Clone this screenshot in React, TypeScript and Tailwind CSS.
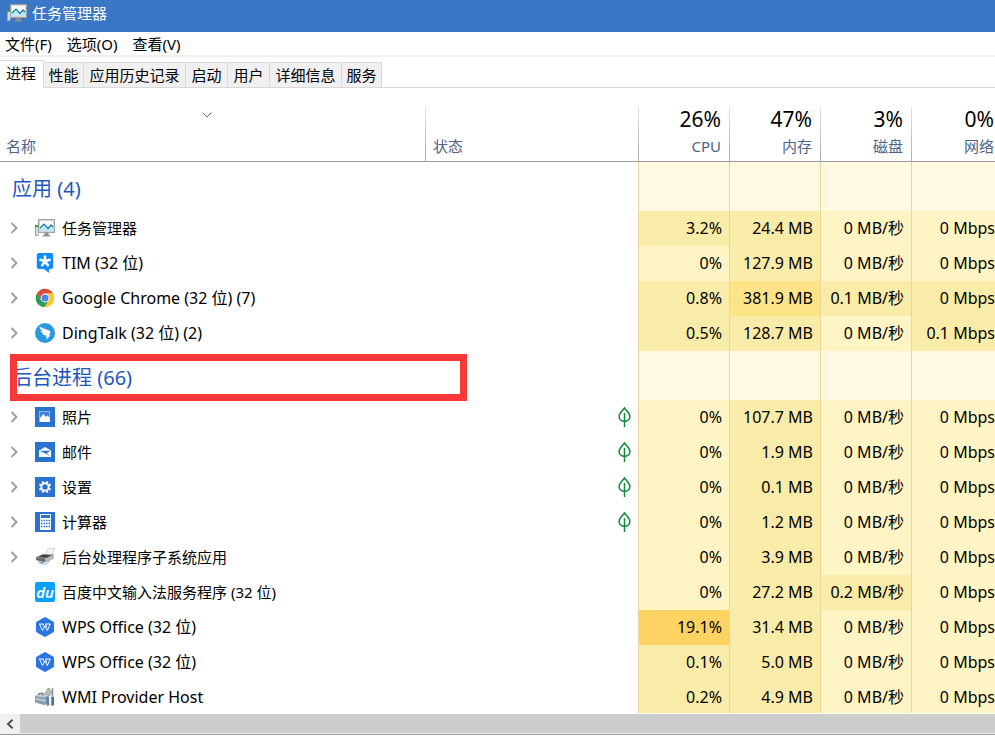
import React from 'react';
import clsx from 'clsx';

type Heat = 'low' | 'mid' | 'high' | 'max';

interface Process {
  id: string;
  name: string;
  icon: React.FC;
  expandable?: boolean;
  suspended?: boolean;
  values: [string, string, string, string];
  heat: [Heat, Heat, Heat, Heat];
}

const heatColors: Record<Heat, string> = {
  low: 'bg-[#fff4c4]',
  mid: 'bg-[#f9eca8]',
  high: 'bg-[#ffe387]',
  max: 'bg-[#ffd264]',
};

/* Process icons */

const TaskManagerIcon: React.FC = () => (
  <svg viewBox="0 0 20 20" className="h-5 w-5">
    <path d="M0 7h3.500v11H0z" fill="#a4a4a4" />
    <path d="M1 9h2v8H1z" fill="#dadada" />
    <path d="M0 7h3v2H0z" fill="#17b81a" />
    <rect x="3" y="1" width="17" height="14" fill="#9fa3a3" />
    <rect x="4" y="2" width="15" height="12" fill="#d3d5d5" />
    <rect x="5" y="3" width="13" height="10" fill="#f6fcfe" />
    <path d="M5 10l4-4 4 4.500 3-3.500 2 2v4H5z" fill="#bde9f8" />
    <path d="M5 10l4-4 4 4.500 3-3.500 2 2" fill="none" stroke="#17789f" strokeWidth="1.200" />
    <path d="M9.500 15h4v1.500l2.500 2H7l2.500-2z" fill="#8e8e8e" />
  </svg>
);

const TimIcon: React.FC = () => (
  <svg viewBox="0 0 20 20" className="h-5 w-5">
    <path
      d="M4 0h12a2.200 2.200 0 0 1 2.200 2.200v11.600A2.200 2.200 0 0 1 16 16h-2v4l-5-4H4a2.200 2.200 0 0 1-2.200-2.200V2.200A2.200 2.200 0 0 1 4 0z"
      fill="#0f8cfb"
    />
    <path
      d="M10 8.300V3.500M10 8.300l4.600-1.500M10 8.300l2.800 3.900M10 8.300l-2.800 3.900M10 8.300L5.400 6.800"
      stroke="#fff"
      strokeWidth="2.600"
      strokeLinecap="round"
    />
  </svg>
);

const ChromeIcon: React.FC = () => (
  <svg viewBox="0 0 20 20" className="h-5 w-5">
    <circle cx="10" cy="10" r="9.300" fill="#fcc934" />
    <path d="M1.950 5.350A9.300 9.300 0 0 1 18.050 5.350H10L6 12.300z" fill="#dd4b3e" />
    <path d="M1.950 5.350L6 12.300l4 2.200 3-1-4 5.700A9.300 9.300 0 0 1 1.950 5.350z" fill="#1c9f5a" />
    <circle cx="10" cy="10" r="4.400" fill="#fff" />
    <circle cx="10" cy="10" r="3.500" fill="#4a86ee" />
  </svg>
);

const DingTalkIcon: React.FC = () => (
  <svg viewBox="0 0 20 20" className="h-5 w-5">
    <circle cx="10" cy="10" r="10" fill="#2b98e3" />
    <path
      d="M4.500 3.500c2 1.600 6 2.500 10 4.300 1 .5 1 1.200.6 2.100l-1.200 2.300h1.600L11 17l.9-3.500h-1.500l.5-1.400c-2.200.3-3.300-.6-3.800-1.600l2.200-.1C7 9.900 5.800 9 5.500 7.800l2.600.4C5.800 7 4.500 5.600 4.500 3.500z"
      fill="#fff"
    />
  </svg>
);

const PhotosIcon: React.FC = () => (
  <svg viewBox="0 0 20 20" className="h-5 w-5">
    <path d="M0 0h20v20H0z" fill="#2972ce" />
    <rect x="4.500" y="4.500" width="10" height="10" fill="#3f83d8" stroke="#8cb7ec" />
    <path d="M5 15v-4L8.500 7l2.500 3 1.500-1.500L15 11v4z" fill="#fff" />
  </svg>
);

const MailIcon: React.FC = () => (
  <svg viewBox="0 0 20 20" className="h-5 w-5">
    <path d="M0 0h20v20H0z" fill="#2972ce" />
    <path d="M4 8.500L10 5l6 3.500V15H4z" fill="#fff" />
    <path d="M4.500 8.700h11.200L11 11.700z" fill="#2972ce" />
    <path d="M11 11.400l3 2" stroke="#2972ce" strokeWidth="0.800" />
  </svg>
);

const SettingsIcon: React.FC = () => (
  <svg viewBox="0 0 20 20" className="h-5 w-5">
    <path d="M0 0h20v20H0z" fill="#2972ce" />
    <circle cx="10" cy="10" r="3.700" fill="none" stroke="#fff" strokeWidth="2" />
    <path
      d="M8 6L7.400 4.300M12 6l.6-1.700M14 8l1.700-.6M14 12l1.700.6M12 14l.6 1.700M8 14l-.6 1.700M6 12l-1.700.6M6 8l-1.700-.6"
      stroke="#fff"
      strokeWidth="2"
    />
  </svg>
);

const CalculatorIcon: React.FC = () => (
  <svg viewBox="0 0 20 20" className="h-5 w-5">
    <path d="M0 0h20v20H0z" fill="#2972ce" />
    <path d="M5 2h11v16H5z" fill="#fff" />
    <path d="M6 3h9v3H6z" fill="#2972ce" />
    <path
      d="M6 8.500h9M6 11.500h9M6 14.500h9"
      stroke="#2972ce"
      strokeWidth="1.500"
      strokeDasharray="1.500 1"
    />
  </svg>
);

const PrinterIcon: React.FC = () => (
  <svg viewBox="0 0 20 20" className="h-5 w-5">
    <path d="M10 8l3-6 6.500-.500L17 9z" fill="#f3f3f3" stroke="#bbb" strokeWidth="0.600" />
    <path d="M1 10l7-3 11 .5-2 5-7 2.500-9-2z" fill="#8f9396" />
    <path d="M3 9.800l5-2 8 .5-4.500 2.500z" fill="#3d4144" />
    <path d="M1 10.500l9 1.500v3.500L1.500 13z" fill="#62686b" />
    <path d="M10 12l9-4v3.500l-8 4.500z" fill="#b9bcbe" />
    <path d="M3 14l7 1 4-1.500v1.500l-4 2.500-6-1.500z" fill="#dfe5e9" stroke="#8d979d" strokeWidth="0.500" />
    <path d="M6 15l3 .6-1.500 1L5 16z" fill="#4192c4" />
  </svg>
);

const BaiduIcon: React.FC = () => (
  <span className="flex h-5 w-5 items-center justify-center rounded-xs bg-[#0a9ffb] text-[15px] leading-5 font-semibold text-white italic">
    du
  </span>
);

const WpsIcon: React.FC = () => (
  <svg viewBox="0 0 20 20" className="h-5 w-5">
    <path
      d="M9 .4a2 2 0 0 1 2 0l7 4a2 2 0 0 1 1 1.700v7.800a2 2 0 0 1-1 1.700l-7 4a2 2 0 0 1-2 0l-7-4a2 2 0 0 1-1-1.700V6.100a2 2 0 0 1 1-1.700z"
      fill="#2a74e6"
    />
    <path
      d="M4 7h4.500M4.500 7l3 6.500L10 9l2.300 4.500 3-6.500h-5l1.600 3.200M8 7l1.300 2.800"
      fill="none"
      stroke="#fff"
      strokeWidth="1"
    />
  </svg>
);

const WmiIcon: React.FC = () => (
  <svg viewBox="0 0 20 20" className="h-5 w-5">
    <path d="M9 8l4-7 2 .5v3l2-1 .5 2-3 3.500z" fill="#b7bbbd" stroke="#858b8e" strokeWidth="0.500" />
    <path d="M0 9l5-2.500 9 1.500v9L9 18l-9-2.500z" fill="#8b9fac" />
    <path d="M0 9l5-2.500 9 1.500-5 2.500z" fill="#c4d0d7" />
    <path d="M1 12l8 1.500 3-1" fill="none" stroke="#dfe8ec" />
    <path d="M4 8V6.500L8 6v2.500" fill="none" stroke="#555e64" />
    <path d="M11 11l2.500-1 1 8-2.500 1z" fill="#5583ad" />
    <path d="M17.500 1v9" stroke="#8d9396" strokeWidth="1.500" />
    <path d="M16 10h3v8.500h-3z" fill="#48719b" />
    <path d="M16.500 11v7" stroke="#8db3d3" strokeWidth="0.700" />
  </svg>
);

const LeafIcon: React.FC = () => (
  <svg viewBox="0 0 14 20" className="h-5 w-3.5">
    <path
      d="M7.500 1C9 3.500 12.900 5.500 12.900 9.500c0 2.700-2.300 4.700-5.400 4.700S2.100 12.200 2.100 9.500C2.100 5.500 6 3.500 7.500 1zM7.500 6v14"
      fill="none"
      stroke="#0f8c36"
      strokeWidth="1.500"
    />
  </svg>
);

const apps: Process[] = [
  {
    id: 'taskmgr',
    name: '任务管理器',
    icon: TaskManagerIcon,
    expandable: true,
    values: ['3.2%', '24.4 MB', '0 MB/秒', '0 Mbps'],
    heat: ['mid', 'mid', 'low', 'low'],
  },
  {
    id: 'tim',
    name: 'TIM (32 位)',
    icon: TimIcon,
    expandable: true,
    values: ['0%', '127.9 MB', '0 MB/秒', '0 Mbps'],
    heat: ['low', 'mid', 'low', 'low'],
  },
  {
    id: 'chrome',
    name: 'Google Chrome (32 位) (7)',
    icon: ChromeIcon,
    expandable: true,
    values: ['0.8%', '381.9 MB', '0.1 MB/秒', '0 Mbps'],
    heat: ['mid', 'high', 'mid', 'mid'],
  },
  {
    id: 'dingtalk',
    name: 'DingTalk (32 位) (2)',
    icon: DingTalkIcon,
    expandable: true,
    values: ['0.5%', '128.7 MB', '0 MB/秒', '0.1 Mbps'],
    heat: ['mid', 'mid', 'low', 'mid'],
  },
];

const background: Process[] = [
  {
    id: 'photos',
    name: '照片',
    icon: PhotosIcon,
    expandable: true,
    suspended: true,
    values: ['0%', '107.7 MB', '0 MB/秒', '0 Mbps'],
    heat: ['low', 'mid', 'low', 'low'],
  },
  {
    id: 'mail',
    name: '邮件',
    icon: MailIcon,
    expandable: true,
    suspended: true,
    values: ['0%', '1.9 MB', '0 MB/秒', '0 Mbps'],
    heat: ['low', 'mid', 'low', 'low'],
  },
  {
    id: 'settings',
    name: '设置',
    icon: SettingsIcon,
    expandable: true,
    suspended: true,
    values: ['0%', '0.1 MB', '0 MB/秒', '0 Mbps'],
    heat: ['low', 'mid', 'low', 'low'],
  },
  {
    id: 'calculator',
    name: '计算器',
    icon: CalculatorIcon,
    expandable: true,
    suspended: true,
    values: ['0%', '1.2 MB', '0 MB/秒', '0 Mbps'],
    heat: ['low', 'mid', 'low', 'low'],
  },
  {
    id: 'spooler',
    name: '后台处理程序子系统应用',
    icon: PrinterIcon,
    expandable: true,
    values: ['0%', '3.9 MB', '0 MB/秒', '0 Mbps'],
    heat: ['low', 'mid', 'low', 'low'],
  },
  {
    id: 'baidu',
    name: '百度中文输入法服务程序 (32 位)',
    icon: BaiduIcon,
    values: ['0%', '27.2 MB', '0.2 MB/秒', '0 Mbps'],
    heat: ['low', 'mid', 'mid', 'low'],
  },
  {
    id: 'wps-1',
    name: 'WPS Office (32 位)',
    icon: WpsIcon,
    values: ['19.1%', '31.4 MB', '0 MB/秒', '0 Mbps'],
    heat: ['max', 'mid', 'low', 'low'],
  },
  {
    id: 'wps-2',
    name: 'WPS Office (32 位)',
    icon: WpsIcon,
    values: ['0.1%', '5.0 MB', '0 MB/秒', '0 Mbps'],
    heat: ['mid', 'mid', 'low', 'low'],
  },
  {
    id: 'wmi',
    name: 'WMI Provider Host',
    icon: WmiIcon,
    values: ['0.2%', '4.9 MB', '0 MB/秒', '0 Mbps'],
    heat: ['mid', 'mid', 'low', 'low'],
  },
];

const menus = ['文件(F)', '选项(O)', '查看(V)'];

const tabs = [
  { label: '性能', width: 'w-10' },
  { label: '应用历史记录', width: 'w-[102px]' },
  { label: '启动', width: 'w-[42px]' },
  { label: '用户', width: 'w-[42px]' },
  { label: '详细信息', width: 'w-[72px]' },
  { label: '服务', width: 'w-10' },
];

const resources = [
  { label: 'CPU', usage: '26%' },
  { label: '内存', usage: '47%' },
  { label: '磁盘', usage: '3%' },
  { label: '网络', usage: '0%' },
];

// Column separator that fades out towards the top of the header
const headerRule =
  'bg-[linear-gradient(to_bottom,#e4e4e4,#ababab)] bg-[length:1px_54px] bg-left-bottom bg-no-repeat';

// Names that start with Latin letters are set one size up, next to the denser Chinese ones
const nameSize = (name: string) => (/^[A-Z]/.test(name) ? 'text-base' : 'text-[15px]');

const GroupRow: React.FC<{ title: string; highlighted?: boolean }> = ({ title, highlighted }) => (
  <tr className="h-[49px]">
    <th
      scope="rowgroup"
      colSpan={2}
      className="relative pt-1 pl-3 text-left text-xl leading-7 font-normal text-[#1e57bd]"
    >
      {title}
      {highlighted && (
        <span className="absolute top-[3px] left-2.5 h-[47px] w-[457px] border-7 border-[#fb3838]" />
      )}
    </th>
    {resources.map((resource) => (
      <td key={resource.label} className="border-l border-[#e9d59f] bg-[#fff8e3]" />
    ))}
  </tr>
);

const ProcessRow: React.FC<{ process: Process }> = ({ process }) => {
  const Icon = process.icon;

  return (
    <tr className="h-[35px]">
      <td className="pb-0.5">
        <div className="flex items-center pl-2.5">
          <span className="w-[25px]">
            {process.expandable && (
              <button aria-label={`展开 ${process.name}`} className="block">
                <svg viewBox="0 0 8 12" className="h-3 w-2">
                  <path d="M1.500 1l5 5-5 5" fill="none" stroke="#9f9f9f" strokeWidth="2" />
                </svg>
              </button>
            )}
          </span>
          <Icon />
          <span className={clsx('pl-[7px] leading-5 whitespace-nowrap', nameSize(process.name))}>
            {process.name}
          </span>
        </div>
      </td>
      <td className="pb-0.5">
        {process.suspended && (
          <div className="flex justify-end pr-[7px]">
            <LeafIcon />
          </div>
        )}
      </td>
      {process.values.map((value, i) => (
        <td
          key={resources[i].label}
          className={clsx(
            'border-l border-[#e9d59f] pr-[7px] pb-0.5 text-right text-base leading-5 whitespace-nowrap',
            heatColors[process.heat[i]],
          )}
        >
          {value}
        </td>
      ))}
    </tr>
  );
};

export default function App() {
  return (
    <div className="min-h-screen overflow-hidden bg-white font-['Noto_Sans','Noto_Sans_CJK_SC',sans-serif] text-[15px] leading-5 text-black">
      {/* Title bar */}
      <header className="flex h-8 items-center gap-[5px] bg-[#3a78c7] pb-1.5 pl-[7px] text-white">
        <TaskManagerIcon />
        <h1>任务管理器</h1>
      </header>

      {/* Menu bar */}
      <nav className="flex h-[25px] items-center gap-[15px] border-b-2 border-[#f0f0f0] pl-[5px]">
        {menus.map((menu) => (
          <button key={menu}>{menu}</button>
        ))}
      </nav>

      {/* Tabs */}
      <div role="tablist" className="flex items-end pt-[3px]">
        <button
          role="tab"
          aria-selected="true"
          className="h-7 w-11 border-t border-r border-[#d9d9d9] pr-px pb-1"
        >
          进程
        </button>
        {tabs.map((tab) => (
          <button
            key={tab.label}
            role="tab"
            aria-selected="false"
            className={clsx(
              'h-[26px] border-t border-r border-b border-[#d9d9d9] bg-[#f0f0f0] whitespace-nowrap',
              tab.width,
            )}
          >
            {tab.label}
          </button>
        ))}
        <div className="flex-1 border-b border-[#d9d9d9]" />
      </div>

      {/* Process list */}
      <table className="w-[calc(100%+7px)] table-fixed border-separate border-spacing-0">
        <colgroup>
          <col />
          <col className="w-[213px]" />
          {resources.map((resource) => (
            <col key={resource.label} className="w-[91px]" />
          ))}
        </colgroup>
        <thead>
          <tr className="h-[74px] text-[#4d6488]">
            <th className="relative border-b border-[#9b9b9b] pb-[5px] pl-1.5 text-left align-bottom font-normal">
              <svg viewBox="0 0 10 6" className="absolute top-6 left-[202px] h-1.5 w-2.5">
                <path d="M.5.5L5 5 9.500.5" fill="none" stroke="#666" />
              </svg>
              名称
            </th>
            <th
              className={clsx(
                'border-b border-[#9b9b9b] pb-[5px] pl-2 text-left align-bottom font-normal',
                headerRule,
              )}
            >
              状态
            </th>
            {resources.map((resource) => (
              <th
                key={resource.label}
                className={clsx(
                  'border-b border-[#9b9b9b] pr-2 pb-[5px] text-right align-bottom font-normal',
                  headerRule,
                )}
              >
                <span className="block pb-[3px] text-[21px] leading-7 text-black">
                  {resource.usage}
                </span>
                {resource.label}
              </th>
            ))}
          </tr>
        </thead>
        <tbody>
          <GroupRow title="应用 (4)" />
          {apps.map((process) => (
            <ProcessRow key={process.id} process={process} />
          ))}
        </tbody>
        <tbody>
          <GroupRow title="后台进程 (66)" highlighted />
          {background.map((process) => (
            <ProcessRow key={process.id} process={process} />
          ))}
        </tbody>
      </table>

      {/* Horizontal scrollbar, cuts off the bottom of the last row */}
      <div className="relative -mt-0.5 flex h-[22px] border-t border-b border-t-white border-b-[#9b9b9b] bg-[#f0f0f0]">
        <button aria-label="向左滚动" className="flex w-5 items-center justify-center">
          <svg viewBox="0 0 8 10" className="h-2.5 w-2">
            <path d="M6.500 .7L2 5l4.500 4.300" fill="none" stroke="#505050" strokeWidth="2" />
          </svg>
        </button>
        <div className="mb-px flex-1 bg-[#cdcdcd]" />
      </div>
    </div>
  );
}
